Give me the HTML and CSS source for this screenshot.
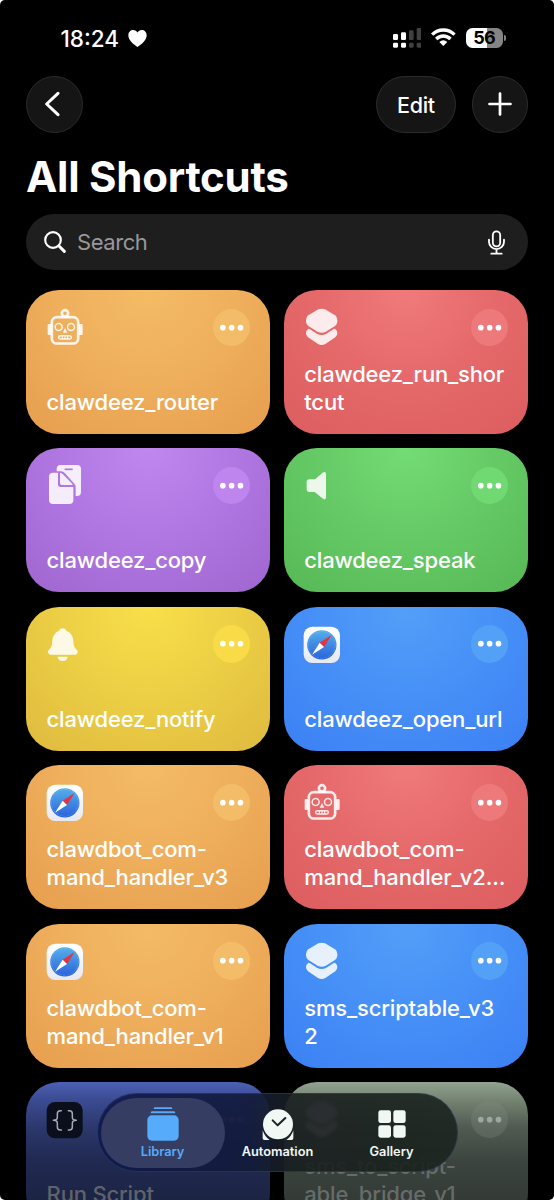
FILE: index.html
```html
<!DOCTYPE html>
<html lang="en">
<head>
    <meta charset="UTF-8">
    <meta name="viewport" content="width=device-width, initial-scale=1.0">
    <title>All Shortcuts</title>
    <link rel="stylesheet" href="styles.css">
</head>
<body>
    <!-- shared icons -->
    <svg class="defs" width="0" height="0">
        <defs>
            <linearGradient id="compass" x1="0" y1="0" x2="0" y2="1">
                <stop offset="0" stop-color="#56b0ea"/>
                <stop offset="1" stop-color="#2a62dc"/>
            </linearGradient>
            <linearGradient id="tile" x1="0" y1="0" x2="0" y2="1">
                <stop offset="0" stop-color="#ffffff"/>
                <stop offset="1" stop-color="#e6e9f2"/>
            </linearGradient>
        </defs>
        <symbol id="robot" viewBox="0 0 108 114">
            <g fill="none" stroke="currentColor">
                <rect x="14.5" y="27.5" width="79" height="79" rx="15" stroke-width="8"/>
                <circle cx="54" cy="16" r="9.5" stroke-width="8"/>
                <circle cx="35" cy="57" r="10.5" stroke-width="4.5"/>
                <circle cx="72" cy="57" r="10.5" stroke-width="4.5"/>
                <rect x="35" y="83" width="38" height="10" rx="5" stroke-width="4.5"/>
                <path d="M46 83v10M54 83v10M62 83v10" stroke-width="3.5"/>
            </g>
            <path d="M42 24h24v5h-24zM2 51q0-3 3-3h8v33h-8q-3 0-3-3zM107 51q0-3-3-3h-8v33h8q3 0 3-3zM54 60l7 14h-14z" fill="currentColor"/>
        </symbol>
        <symbol id="layers" viewBox="0 0 108 114">
            <path d="M43 4q10-4 20 0l30 18q7 5 7 14v4q0 9-7 14L64 72q-11 5-22 0L13 54q-7-5-7-14v-4q0-9 7-14z" fill="currentColor"/>
            <path d="M13 62q3 0 5 2l22 14q13 6 26 0l22-14q2-2 5-2 7 5 7 14 0 7-6 12l-30 20q-11 6-22 0L12 88q-6-5-6-12 0-9 7-14z" fill="currentColor"/>
        </symbol>
        <symbol id="safari" viewBox="0 0 108 114" overflow="visible">
            <rect x="-1" y="5" width="109" height="109" rx="26" fill="url(#tile)"/>
            <circle cx="53.500" cy="59.500" r="44" fill="url(#compass)"/>
            <circle cx="53.500" cy="59.500" r="40" fill="none" stroke="#a9d3f5" stroke-width="3" stroke-dasharray="1 3.200" opacity=".75"/>
            <path d="M83 30L47 53l13 13z" fill="#e8323c"/>
            <path d="M24 89L47 53l13 13z" fill="#ffffff"/>
        </symbol>
        <symbol id="dots" viewBox="0 0 112 112">
            <circle cx="29.500" cy="56" r="8.500" fill="currentColor"/>
            <circle cx="56" cy="56" r="8.500" fill="currentColor"/>
            <circle cx="82.500" cy="56" r="8.500" fill="currentColor"/>
        </symbol>
    </svg>

    <div class="phone">
        <header class="status">
            <span class="time">18:24</span>
            <svg class="heart" viewBox="0 0 56 52"><path d="M28 52C14 42 0 31 0 16 0 6 7 0 15 0c6 0 10 3 13 8 3-5 7-8 13-8 8 0 15 6 15 16 0 15-14 26-28 36z" fill="#fff"/></svg>
            <svg class="signal" viewBox="0 0 86 60">
                <g fill="#fff">
                    <rect x="0" y="18" width="15" height="18" rx="4"/><rect x="0" y="44" width="15" height="15" rx="4"/>
                    <rect x="24" y="13" width="15" height="23" rx="4"/><rect x="24" y="44" width="15" height="15" rx="4"/>
                </g>
                <g fill="#404040">
                    <rect x="48" y="7" width="14" height="29" rx="4"/><rect x="48" y="44" width="14" height="15" rx="4"/>
                    <rect x="71" y="0" width="14" height="36" rx="4"/><rect x="71" y="44" width="14" height="15" rx="4"/>
                </g>
            </svg>
            <svg class="wifi" viewBox="0 0 74 54">
                <g fill="none" stroke="#fff" stroke-width="10">
                    <path d="M3.500 20a47 47 0 0 1 67 0"/>
                    <path d="M15.500 33a30 30 0 0 1 43 0"/>
                </g>
                <path d="M37 54l-12-12q12-10 24 0z" fill="#fff"/>
            </svg>
            <span class="battery">56</span>
        </header>

        <nav class="toolbar">
            <button class="glass round">
                <svg width="16" height="26" viewBox="0 0 48 78"><path d="M42 7L8 39l34 32" fill="none" stroke="#fff" stroke-width="9" stroke-linecap="round" stroke-linejoin="round"/></svg>
            </button>
            <button class="glass edit">Edit</button>
            <button class="glass round">
                <svg width="24" height="24" viewBox="0 0 24 24"><path d="M12 1.500v21M1.500 12h21" stroke="#fff" stroke-width="2.700" stroke-linecap="round"/></svg>
            </button>
        </nav>

        <h1>All Shortcuts</h1>

        <div class="search">
            <svg width="22" height="22" viewBox="0 0 66 66"><g fill="none" stroke="#fff" stroke-linecap="round"><circle cx="27" cy="27" r="23.500" stroke-width="6.500"/><path d="M45 45l16 16" stroke-width="9"/></g></svg>
            <span>Search</span>
            <svg width="17" height="25" viewBox="0 0 51 75"><g fill="none" stroke="#fff" stroke-width="5.500" stroke-linecap="round"><rect x="14.500" y="4" width="22" height="45" rx="11"/><path d="M3 29v6a22.500 22.500 0 0 0 45 0v-6M25.500 58v13M10 71h31"/></g></svg>
        </div>

        <main class="grid">
            <div class="card orange">
                <svg class="icon"><use href="#robot"/></svg>
                <svg class="more"><use href="#dots"/></svg>
                <p>clawdeez_router</p>
            </div>
            <div class="card red">
                <svg class="icon"><use href="#layers"/></svg>
                <svg class="more"><use href="#dots"/></svg>
                <p>clawdeez_run_shor<br>tcut</p>
            </div>
            <div class="card purple">
                <svg class="icon" viewBox="0 0 108 114">
                    <path d="M41-3h49q12 0 12 12v69q0 12-12 12h-4V62q0-5-4-9L54 22q-5-6-12-6H29V9q0-12 12-12z" fill="currentColor"/>
                    <path d="M53 10h24" stroke="#ab76e2" stroke-width="5"/>
                    <path d="M18 20h15v35q0 8 8 8h38v39q0 12-12 12H18q-12 0-12-12V32q0-12 12-12z" fill="currentColor"/>
                    <path d="M39 20q5 1 8 4l27 28q2 2 3 5H44q-5 0-5-5z" fill="currentColor"/>
                </svg>
                <svg class="more"><use href="#dots"/></svg>
                <p>clawdeez_copy</p>
            </div>
            <div class="card green">
                <svg class="icon" viewBox="0 0 108 114"><path d="M16 40h14q3 0 5-2l20-17q5-4 8-3 3 1 3 6v70q0 5-3 6-3 1-8-3L35 80q-2-2-5-2H16q-8 0-8-8V48q0-8 8-8z" fill="currentColor"/></svg>
                <svg class="more"><use href="#dots"/></svg>
                <p>clawdeez_speak</p>
            </div>
            <div class="card yellow">
                <svg class="icon" viewBox="0 0 108 114">
                    <path d="M47 10q8 0 11 7c13 5 20 16 21 30 1 16 3 20 11 28q3 4 2 8-2 6-8 6H11q-6 0-8-6-1-4 2-8c8-8 10-12 11-28 1-14 8-25 20-30q3-7 11-7z" fill="currentColor"/>
                    <path d="M32 95h30q-2 13-15 13t-15-13z" fill="currentColor"/>
                </svg>
                <svg class="more"><use href="#dots"/></svg>
                <p>clawdeez_notify</p>
            </div>
            <div class="card blue">
                <svg class="icon app"><use href="#safari"/></svg>
                <svg class="more"><use href="#dots"/></svg>
                <p>clawdeez_open_url</p>
            </div>
            <div class="card orange">
                <svg class="icon app"><use href="#safari"/></svg>
                <svg class="more"><use href="#dots"/></svg>
                <p>clawdbot_com-<br>mand_handler_v3</p>
            </div>
            <div class="card red">
                <svg class="icon"><use href="#robot"/></svg>
                <svg class="more"><use href="#dots"/></svg>
                <p>clawdbot_com-<br>mand_handler_v2...</p>
            </div>
            <div class="card orange">
                <svg class="icon app"><use href="#safari"/></svg>
                <svg class="more"><use href="#dots"/></svg>
                <p>clawdbot_com-<br>mand_handler_v1</p>
            </div>
            <div class="card blue">
                <svg class="icon"><use href="#layers"/></svg>
                <svg class="more"><use href="#dots"/></svg>
                <p>sms_scriptable_v3<br>2</p>
            </div>
            <div class="card indigo">
                <svg class="icon" viewBox="0 0 108 114">
                    <rect x="-1" y="6" width="108" height="109" rx="25" fill="#0b0f1c"/>
                    <g fill="none" stroke="#a3abb9" stroke-width="4.500" stroke-linecap="round" stroke-linejoin="round">
                        <path d="M43 32h-3q-9 0-9 9v11q0 9-12 9 12 0 12 9v11q0 9 9 9h3"/>
                        <path d="M64 32h3q9 0 9 9v11q0 9 12 9-12 0-12 9v11q0 9-9 9h-3"/>
                    </g>
                </svg>
                <svg class="more"><use href="#dots"/></svg>
                <p>Run Script</p>
            </div>
            <div class="card gray">
                <svg class="icon"><use href="#layers"/></svg>
                <svg class="more"><use href="#dots"/></svg>
                <p>sms_to_script-<br>able_bridge_v1</p>
            </div>
        </main>

        <nav class="tabbar">
            <a class="tab active">
                <svg width="32" height="34" viewBox="0 0 96 102"><g fill="currentColor"><path d="M23 1h50q3 0 3 5H20q0-5 3-5zM15 13h66q4 0 4 6H11q0-6 4-6z"/><rect x="1" y="25" width="94" height="76" rx="14"/></g></svg>
                <span>Library</span>
            </a>
            <a class="tab">
                <svg width="32" height="34" viewBox="0 0 96 102">
                    <path d="M2 70v24q0 5 5 5h16Q8 89 2 70zM94 70v24q0 5-5 5H73Q88 89 94 70z" fill="currentColor"/>
                    <circle cx="48" cy="52" r="45" fill="currentColor"/>
                    <path d="M32 40l15 15 23-22" fill="none" stroke="#192027" stroke-width="6" stroke-linecap="round" stroke-linejoin="round"/>
                </svg>
                <span>Automation</span>
            </a>
            <a class="tab">
                <svg width="28" height="34" viewBox="0 0 84 102"><g fill="currentColor"><rect x="1" y="10" width="38" height="38" rx="7"/><rect x="46" y="10" width="37" height="38" rx="7"/><rect x="1" y="55" width="38" height="37" rx="7"/><rect x="46" y="55" width="37" height="37" rx="7"/></g></svg>
                <span>Gallery</span>
            </a>
        </nav>
    </div>
</body>
</html>
```
FILE: styles.css
```css
* {
    box-sizing: border-box;
}
html {
    background: #fff;
}
body {
    margin: 0;
    font-family: Inter, "Liberation Sans", sans-serif;
    color: #fff;
}
.defs {
    position: absolute;
}
.phone {
    position: relative;
    width: 554px;
    height: 1200px;
    overflow: hidden;
    background: #000;
    border-radius: 5px;
}
button {
    font: inherit;
    color: inherit;
    padding: 0;
}
h1,
p {
    margin: 0;
}

/* status bar */
.status {
    display: flex;
    align-items: center;
    height: 76px;
    padding: 0 49px 0 60.500px;
}
.time {
    width: 60px;
    font-size: 22.500px;
    font-weight: 550;
}
.heart {
    width: 19px;
    height: 17px;
    margin-left: 7px;
}
.signal {
    width: 28.700px;
    height: 20px;
    margin-left: auto;
    margin-top: -1px;
}
.wifi {
    width: 24.700px;
    height: 18px;
    margin-left: 10px;
    margin-top: -2px;
    overflow: visible;
}
.battery {
    position: relative;
    width: 37px;
    height: 20px;
    margin-left: 9.500px;
    margin-right: 2.500px;
    margin-top: -1px;
    border-radius: 6.500px;
    background: linear-gradient(90deg, #fff 56%, #848484 56%);
    color: #000;
    font-size: 18px;
    font-weight: 700;
    letter-spacing: -0.800px;
    line-height: 20px;
    text-align: center;
}
.battery::after {
    content: "";
    position: absolute;
    left: 38px;
    top: 7px;
    width: 2px;
    height: 6px;
    border-radius: 0 2px 2px 0;
    background: #848484;
}

/* toolbar */
.toolbar {
    display: flex;
    gap: 15.500px;
    padding: 0 26px;
}
.glass {
    display: flex;
    align-items: center;
    justify-content: center;
    height: 56.500px;
    background: #151515;
    border: 1px solid #2b2b2b;
    border-radius: 29px;
}
.round {
    width: 56.500px;
}
.round:first-child svg {
    margin-left: -5px;
}
.edit {
    width: 80px;
    margin-left: auto;
    padding-top: 1px;
    font-size: 21.500px;
    font-weight: 500;
    letter-spacing: -0.300px;
}
h1 {
    height: 81.500px;
    padding: 18px 26px 0;
    font-size: 42px;
    font-weight: 700;
    letter-spacing: -0.250px;
    line-height: 52px;
}

/* search */
.search {
    display: flex;
    align-items: center;
    height: 56px;
    margin: 0 26px 20px;
    padding: 0 23px 0 17.500px;
    background: #1e1e1e;
    border-radius: 28px;
}
.search span {
    flex: 1;
    margin-left: 11.500px;
    font-size: 22px;
    letter-spacing: -0.450px;
    color: #98989c;
}

/* shortcuts */
.grid {
    display: grid;
    grid-template-columns: 1fr 1fr;
    grid-auto-rows: 144px;
    gap: 14.400px 13.400px;
    padding: 0 26px;
}
.card {
    display: grid;
    grid-template-columns: 36px 37.300px;
    grid-template-rows: 38px 1fr;
    justify-content: space-between;
    padding: 18px 20px 18px 20.600px;
    border-radius: 33px;
    color: #fff;
}
.icon {
    width: 36px;
    height: 38px;
    overflow: visible;
    color: rgba(255, 255, 255, 0.87);
}
.more {
    width: 37.300px;
    height: 37.300px;
    margin-top: 0.700px;
    border-radius: 50%;
}
.card p {
    grid-column: 1 / 3;
    align-self: end;
    font-size: 22px;
    font-weight: 500;
    letter-spacing: -0.180px;
    line-height: 28px;
    white-space: nowrap;
}
.orange {
    background: radial-gradient(circle at 50% 0, #f4bb65, #efb05d 45%, #e69e4e 100%);
}
.orange .more {
    background: #f3bc69;
}
.red {
    background: radial-gradient(circle at 50% 0, #f07a7b, #e66a6b 45%, #dc5d5f 100%);
}
.red .more {
    background: #ee797b;
}
.purple {
    background: radial-gradient(circle at 50% 0, #c087f0, #b178e3 45%, #9f66d0 100%);
}
.purple .more {
    background: #be85ef;
}
.green {
    background: radial-gradient(circle at 50% 0, #74dc75, #66cb66 45%, #56b855 100%);
}
.green .more {
    background: #71d972;
}
.yellow {
    background: radial-gradient(circle at 50% 0, #f9df49, #edd045 45%, #dfba3f 100%);
}
.yellow .more {
    background: #f8db46;
}
.blue {
    background: radial-gradient(circle at 50% 0, #539ff7, #4791f7 45%, #3c80f4 100%);
}
.blue .more {
    background: #53a0f7;
}
.indigo {
    background: linear-gradient(#4c60b5, #3b4b91 18px, #2c386d 45px, #202950 80px, #1c2444 118px);
}
.indigo p {
    color: #60626b;
}
.indigo .more {
    color: #777a70;
    filter: blur(1.500px);
}
.gray {
    background: linear-gradient(#91a391, #72806f 20px, #515b52 45px, #3b443e 80px, #343b37 118px);
}
.gray .icon {
    color: #c5a8c5;
    filter: blur(1.500px);
}
.gray .more {
    color: #a0a5a0;
    background: rgba(130, 140, 130, 0.3);
}
.gray p {
    color: #666c68;
}

/* tab bar */
.tabbar {
    position: absolute;
    left: 97px;
    top: 1093px;
    display: flex;
    width: 361px;
    height: 79px;
    padding: 3.500px 3.500px 3.500px 2.500px;
    border: 1px solid rgba(70, 90, 150, 0.35);
    border-radius: 40px;
    background: linear-gradient(90deg, rgba(16, 25, 75, 0.9), rgba(18, 26, 58, 0.9) 42%, rgba(25, 31, 32, 0.9) 54%, rgba(27, 36, 30, 0.9));
}
.tab {
    display: flex;
    flex-direction: column;
    align-items: center;
    width: 106px;
    padding-top: 9px;
    color: #f1f7f3;
    font-size: 12.800px;
    font-weight: 600;
    line-height: 16px;
}
.tab svg {
    margin-bottom: 3px;
}
.active {
    width: 124px;
    border-radius: 35px;
    background: #353d62;
    color: #56abfb;
}
.tab:last-child {
    width: 122px;
}
```
